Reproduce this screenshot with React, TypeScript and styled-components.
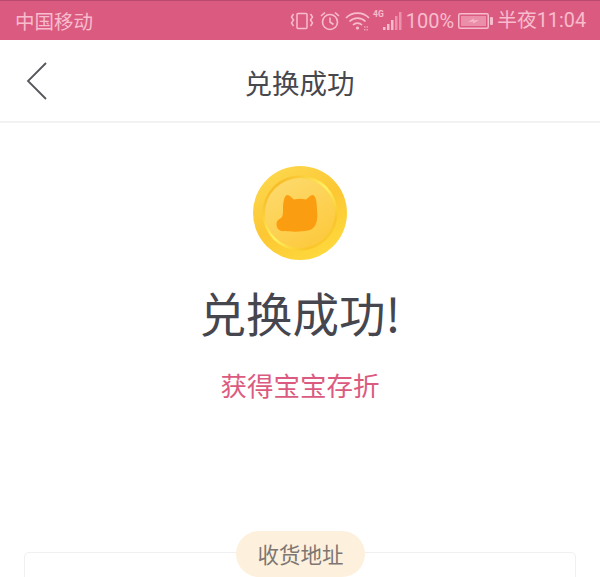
import React from "react";
import styled, { createGlobalStyle } from "styled-components";

const Global = createGlobalStyle`
  html, body { margin: 0; padding: 0; background: #fff; }
  body { font-family: "Noto Sans CJK SC", "Noto Sans", sans-serif; }
`;

const Page = styled.div`
  width: 600px;
  height: 577px;
  overflow: hidden;
  display: flex;
  flex-direction: column;
  background: #fff;
`;

const StatusBar = styled.div`
  height: 40px;
  flex: none;
  box-sizing: border-box;
  border-top: 1px solid #b94a70;
  background: #db5b80;
  color: #f7bccd;
  display: flex;
  align-items: center;
  justify-content: space-between;
  padding: 0 14px 0 15px;
  font-size: 19.5px;
`;

const StatusRight = styled.div`
  display: flex;
  align-items: center;
`;

const StatusText = styled.span<{ $gap?: number }>`
  font-family: "Roboto", "Noto Sans CJK SC", sans-serif;
  font-size: 20px;
  margin-left: ${(p) => p.$gap ?? 0}px;
  line-height: 1;
`;

const Clock = styled(StatusText)`
  font-size: 19.8px;
`;

const Header = styled.header`
  height: 83px;
  flex: none;
  box-sizing: border-box;
  border-bottom: 2px solid #f2f2f3;
  position: relative;
  display: flex;
  align-items: center;
  justify-content: center;
  padding-top: 3px;
`;

const HeaderTitle = styled.h1`
  margin: 0 0 0 -1px;
  font-size: 27.5px;
  font-weight: 400;
  line-height: 40px;
  color: #47474e;
`;

const BackIcon = styled.svg`
  position: absolute;
  left: 26px;
  top: 21px;
`;

const Main = styled.main`
  flex: 1;
  display: flex;
  flex-direction: column;
  align-items: center;
  padding-top: 42px;
`;

const CoinIcon = styled.svg`
  display: block;
  margin-left: -1px;
`;

const Title = styled.div`
  margin-top: 16px;
  font-size: 46.5px;
  line-height: 70px;
  font-weight: 400;
  color: #46464e;
`;

const Subtitle = styled.div`
  margin-top: 20px;
  font-size: 26.5px;
  line-height: 36px;
  color: #db5b80;
`;

const AddressCard = styled.section`
  position: relative;
  margin-top: 149px;
  width: 552px;
  height: 60px;
  flex: none;
  box-sizing: border-box;
  border: 1px solid #f0f0f2;
  border-radius: 5px;
`;

const AddressTag = styled.div`
  position: absolute;
  left: 211px;
  top: -22px;
  width: 129px;
  height: 46px;
  border-radius: 23px;
  background: #fdf1de;
  color: #7d7672;
  font-size: 21.5px;
  line-height: 46px;
  text-align: center;
`;

const Coin = () => (
  <CoinIcon width="96" height="96" viewBox="0 0 96 96">
    <defs>
      <linearGradient id="rim" x1="0.2" y1="0" x2="0.8" y2="1">
        <stop offset="0" stopColor="#fdd84e" />
        <stop offset="0.5" stopColor="#fcc733" />
        <stop offset="1" stopColor="#fedb3e" />
      </linearGradient>
      <linearGradient id="ring" x1="0.1" y1="0.1" x2="0.9" y2="0.9">
        <stop offset="0" stopColor="#f6b41f" />
        <stop offset="0.5" stopColor="#fff260" />
        <stop offset="0.85" stopColor="#fac52b" />
        <stop offset="1" stopColor="#fbcb30" />
      </linearGradient>
      <linearGradient id="face" x1="0.2" y1="0" x2="0.8" y2="1">
        <stop offset="0" stopColor="#fdda6c" />
        <stop offset="1" stopColor="#fdc93c" />
      </linearGradient>
    </defs>
    <circle cx="48" cy="48" r="47" fill="url(#rim)" />
    <circle cx="48" cy="48" r="37.5" fill="url(#ring)" />
    <circle cx="48" cy="48" r="35" fill="url(#face)" />
    <path
      d="M31 44 C31 38 32 31 35 30 C37 29.5 40 33 42 34.5 C46 33.5 50 33.5 54 34.5 C56 33 59 29.5 61 30 C64 31 65 38 65 45 C66 54 65 62 58 65 C50 67 40 67 33 66 C27 67 24.5 63 24.5 59 C24.5 55 28 54 30 52 C31 50 31 47 31 44 Z"
      fill="#fb9d11"
    />
  </CoinIcon>
);

export default function App() {
  return (
    <Page>
      <Global />
      <StatusBar>
        <span>中国移动</span>
        <StatusRight>
          <svg width="24" height="20" viewBox="0 0 24 20" fill="none" stroke="#f7bccd" strokeWidth="1.5">
            <rect x="7" y="2.5" width="10" height="15" rx="1" />
            <path d="M3.5 3 L1.5 6 L3.5 9 L1.5 12 L3.5 15 M20.5 3 L22.5 6 L20.5 9 L22.5 12 L20.5 15" />
          </svg>
          <svg width="22" height="22" viewBox="0 0 22 22" fill="none" stroke="#f7bccd" strokeWidth="1.6" style={{ marginLeft: 5 }}>
            <circle cx="11" cy="12" r="7.5" />
            <path d="M11 7.5 V12 L14.5 14.5 M2 6 L6 2.5 M20 6 L16 2.5" />
          </svg>
          <svg width="25" height="20" viewBox="0 0 25 20" fill="none" stroke="#f7bccd" strokeWidth="1.7" style={{ marginLeft: 4 }}>
            <path d="M1 7 C7 0.5 18 0.5 24 7 M4.5 10.5 C9 6 16 6 20.5 10.5 M8 14 C10.5 11.5 14.5 11.5 17 14" />
            <circle cx="12.5" cy="17" r="1.6" fill="#f7bccd" stroke="none" />
            <path d="M19 16 H24 M19 18.8 H24" strokeWidth="1" strokeDasharray="1.5 1" />
          </svg>
          <svg width="30" height="24" viewBox="0 0 30 24" style={{ marginLeft: 2 }}>
            <text x="1" y="8" fontSize="8.5" fontWeight="700" fill="#f7bccd" fontFamily="Roboto, sans-serif">4G</text>
            <rect x="11" y="18" width="2.5" height="3" fill="#f7bccd" />
            <rect x="15" y="15" width="2.5" height="6" fill="#f7bccd" />
            <rect x="19" y="11" width="2.5" height="10" fill="#f7bccd" />
            <rect x="23" y="7" width="2.5" height="14" fill="#ec92ad" />
            <rect x="27" y="3" width="2.5" height="18" fill="#ec92ad" />
          </svg>
          <StatusText $gap={4}>100%</StatusText>
          <svg width="35" height="16" viewBox="0 0 35 16" style={{ marginLeft: 4 }}>
            <rect x="0.75" y="0.75" width="29.5" height="14.5" rx="1.5" fill="none" stroke="#f7bccd" strokeWidth="1.5" />
            <rect x="3" y="3" width="25" height="10" fill="#ea8ea9" />
            <rect x="32" y="4" width="3" height="8" rx="1" fill="#f7bccd" />
            <path d="M10 9 L16 5.5 L15.5 7.5 L21 7 L15 10.5 L15.5 8.5 Z" fill="#f7bccd" />
          </svg>
          <Clock $gap={4}>半夜11:04</Clock>
        </StatusRight>
      </StatusBar>
      <Header>
        <BackIcon width="22" height="40" viewBox="0 0 22 40" fill="none" stroke="#55555b" strokeWidth="1.8">
          <path d="M20 2 L2 20 L20 38" />
        </BackIcon>
        <HeaderTitle>兑换成功</HeaderTitle>
      </Header>
      <Main>
        <Coin />
        <Title>兑换成功!</Title>
        <Subtitle>获得宝宝存折</Subtitle>
        <AddressCard>
          <AddressTag>收货地址</AddressTag>
        </AddressCard>
      </Main>
    </Page>
  );
}
